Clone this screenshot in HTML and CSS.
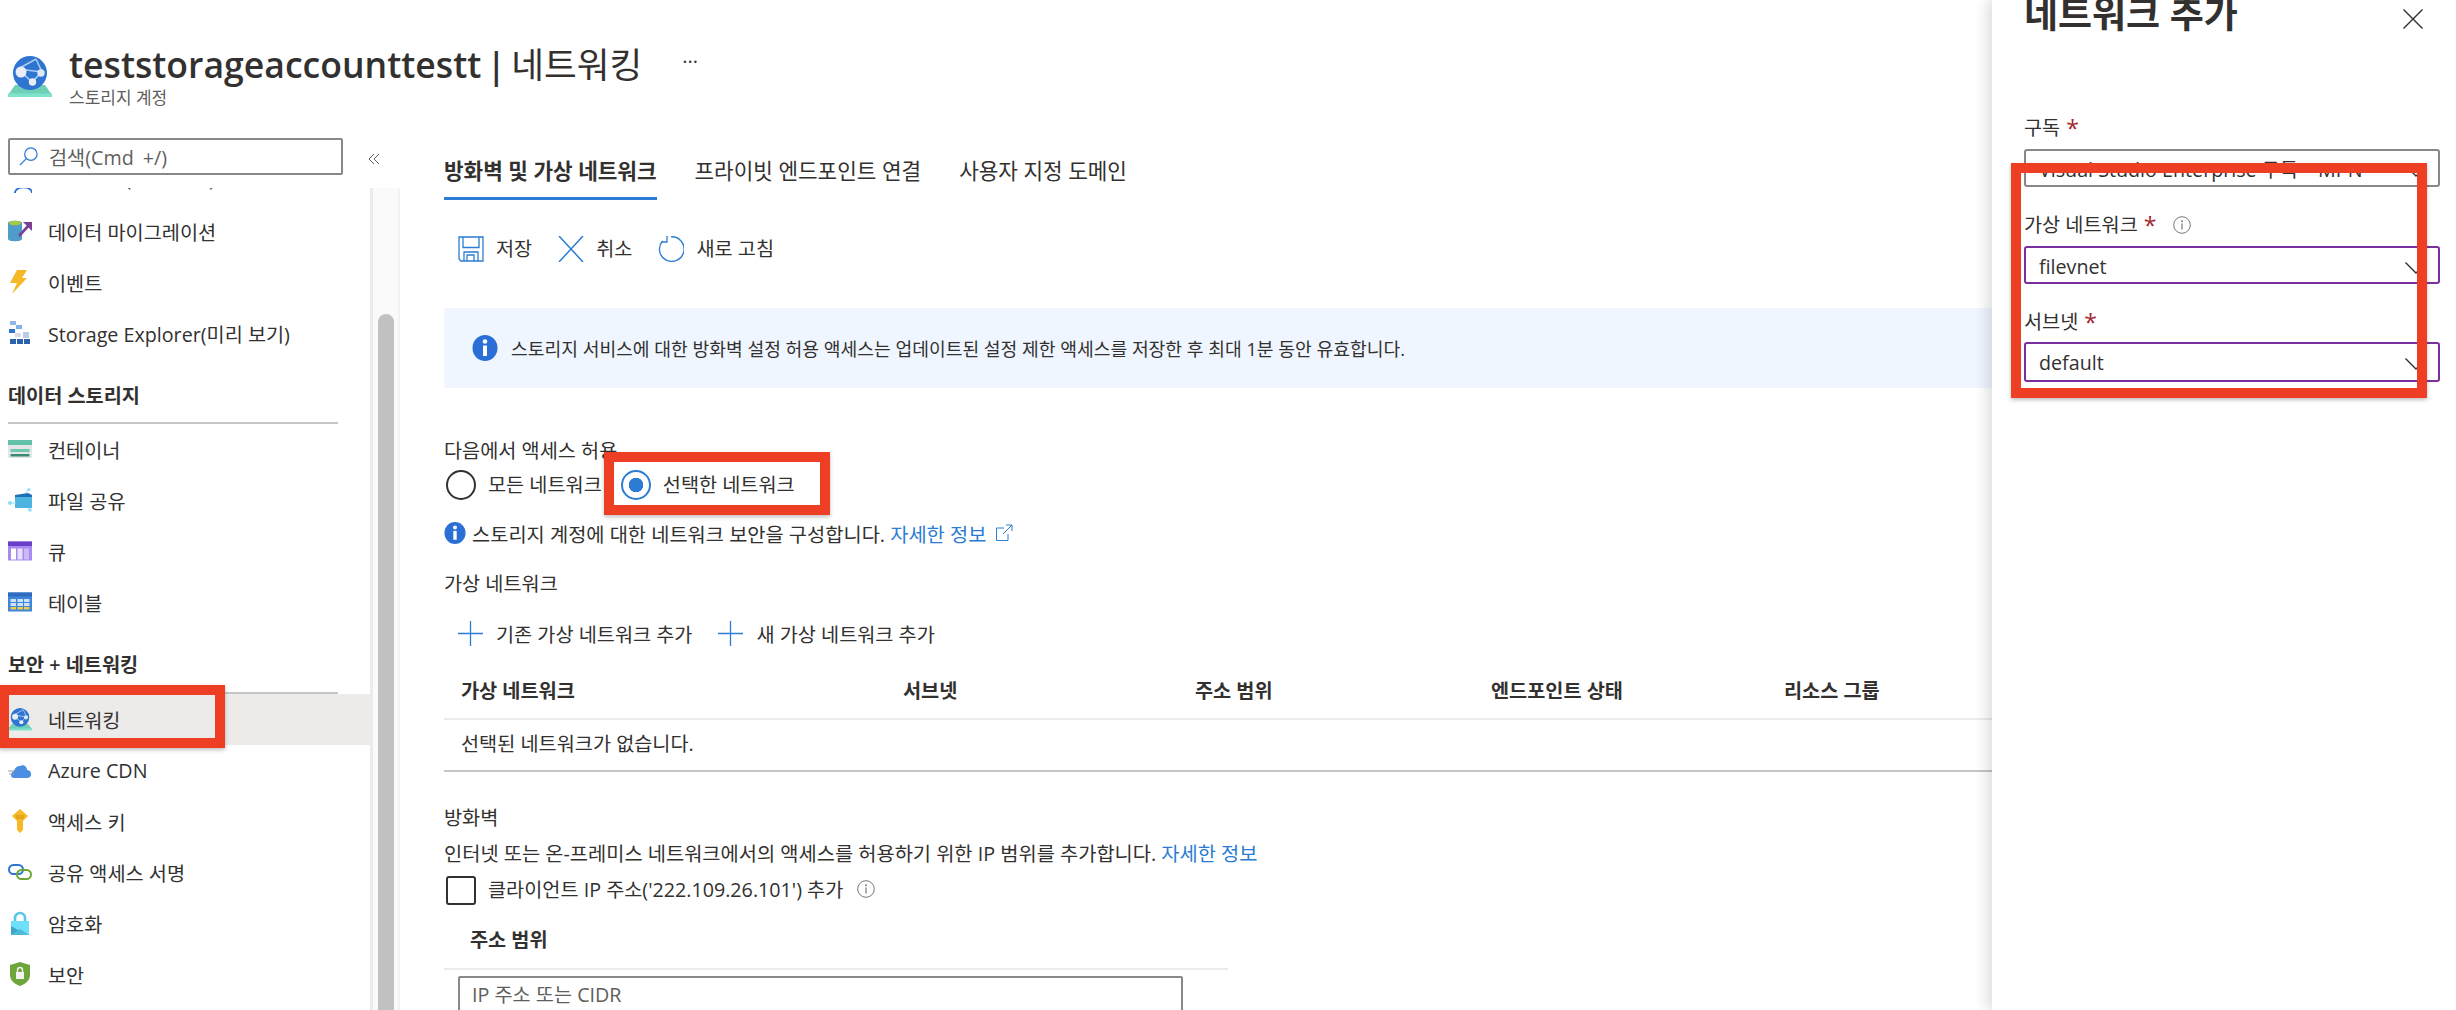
FILE: index.html
```html
<!DOCTYPE html>
<html lang="ko">
<head>
<meta charset="utf-8">
<title>teststorageaccounttestt | 네트워킹</title>
<link rel="stylesheet" href="styles.css">
</head>
<body>
<svg class="defs" width="0" height="0" aria-hidden="true">
  <defs>
    <symbol id="net" viewBox="0 0 44 42">
      <path d="M0 40 L7 30 H37 L44 40 Z" fill="#6fd0b8"/>
      <rect x="0" y="38.500" width="44" height="3.500" fill="#7fe3cb"/>
      <circle cx="22" cy="18" r="17" fill="#2f74d0"/>
      <path d="M10 14 L28 4 M10 14 L24 27 M28 4 L34 17 M24 27 L34 17 M10 14 L34 17" stroke="#a9cdf3" stroke-width="1.600" fill="none"/>
      <circle cx="13" cy="17" r="5.500" fill="#e8eef5"/>
      <circle cx="33" cy="18" r="3.700" fill="#dfe8f2"/>
      <circle cx="24.500" cy="27" r="3.700" fill="#e8eef5"/>
    </symbol>
    <symbol id="ci" viewBox="0 0 26 26">
      <ellipse cx="13" cy="13" rx="12.500" ry="13" fill="#2b6fd6"/>
      <circle cx="13" cy="6.500" r="2.300" fill="#fff"/>
      <rect x="11" y="10.500" width="4" height="10.500" fill="#fff"/>
    </symbol>
    <symbol id="ii" viewBox="0 0 18 18">
      <circle cx="9" cy="9" r="8.300" fill="none" stroke="#7a7875" stroke-width="1"/>
      <circle cx="9" cy="5.300" r="1" fill="#7a7875"/>
      <rect x="8.400" y="7.500" width="1.200" height="6" fill="#7a7875"/>
    </symbol>
    <symbol id="chev" viewBox="0 0 22 12">
      <path d="M0.500 0.500 L11 11 L21.500 0.500" fill="none" stroke="#323130" stroke-width="1.400"/>
    </symbol>
  </defs>
</svg>

<div class="app">
  <header class="blade-head">
    <svg class="head-icon"><use href="#net"/></svg>
    <div class="head-text">
      <h1 class="head-title">teststorageaccounttestt | <span class="head-page">네트워킹</span></h1>
      <div class="head-sub">스토리지 계정</div>
    </div>
    <div class="head-more">···</div>
  </header>

  <div class="workspace">
    <aside class="sidebar">
      <div class="search-row">
        <div class="search">
          <svg class="search-icon" viewBox="0 0 20 20"><circle cx="12.500" cy="7.500" r="6.500" fill="none" stroke="#2b7cd3" stroke-width="1.300"/><path d="M8 12 L1 19" stroke="#2b7cd3" stroke-width="1.300"/></svg>
          <span>검색(Cmd +/)</span>
        </div>
        <svg class="collapse" viewBox="0 0 12 12"><path d="M6 1 L1 6 L6 11 M11 1 L6 6 L11 11" fill="none" stroke="#605e5c" stroke-width="1"/></svg>
      </div>
      <div class="side-body">
        <nav class="nav">
          <div class="nav-item nav-cut">
            <svg class="nav-icon nav-icon-cut" viewBox="0 0 24 24"><path d="M7 8 C7 0.500 24 0.500 24 8" fill="none" stroke="#2b6fd6" stroke-width="1.800"/></svg>
            <span>개체 복제(미리 보기)</span>
          </div>
          <div class="nav-item">
            <svg class="nav-icon" viewBox="0 0 24 24"><path d="M0 4 C0 1 14 1 14 4 V20 C14 23 0 23 0 20 Z" fill="#4f9bc9"/><ellipse cx="7" cy="4" rx="6" ry="2.300" fill="#a5c93f"/><path d="M11 17 L22 5" fill="none" stroke="#7b3f98" stroke-width="2.600"/><path d="M15 3 H24 V12 Z" fill="#7b3f98"/></svg>
            <span>데이터 마이그레이션</span>
          </div>
          <div class="nav-item">
            <svg class="nav-icon" viewBox="0 0 24 24"><path d="M9 0 H19 L14 8 H19 L4 24 L9 13 H2 Z" fill="#f5b826"/></svg>
            <span>이벤트</span>
          </div>
          <div class="nav-item">
            <svg class="nav-icon" viewBox="0 0 24 24"><path d="M2 0 H8 V4 H2 Z" fill="#8fb9ea"/><path d="M8 4 H14 V8 H8 Z" fill="#7fb0ea"/><path d="M1 8 H7 V12 H1 Z" fill="#2f74d0"/><path d="M7 12 H13 V16 H7 Z" fill="#d8dde3"/><path d="M15 11 H21 V17 H15 Z" fill="#b7cdea"/><path d="M2 18 H8 V23 H2 Z M9 18 H15 V23 H9 Z M16 18 H22 V23 H16 Z" fill="#2c62ad"/></svg>
            <span>Storage Explorer(미리 보기)</span>
          </div>

          <div class="nav-group nav-group-first">데이터 스토리지</div>
          <div class="nav-item">
            <svg class="nav-icon" viewBox="0 0 24 18"><rect width="24" height="18" fill="#e3e5e6"/><rect width="24" height="5" fill="#63c0a8"/><rect x="2.500" y="9" width="19" height="3" fill="#6fc7ae"/><rect x="2.500" y="14" width="19" height="2.500" fill="#3e8a78"/></svg>
            <span>컨테이너</span>
          </div>
          <div class="nav-item">
            <svg class="nav-icon" viewBox="0 0 24 24"><path d="M7 7 L20 5 L24 7 V20 H7 Z" fill="#1f6fb4"/><path d="M7 9 H24 V20 H7 Z" fill="#4fb3e0"/><path d="M0 15 H8 M18 5 L20 1 M20 20 L22 23" stroke="#8fe0f8" stroke-width="1"/><circle cx="2" cy="15" r="2" fill="#8fe0f8"/><circle cx="21" cy="1.500" r="1.500" fill="#8fe0f8"/><circle cx="22" cy="22" r="1.800" fill="#8fe0f8"/></svg>
            <span>파일 공유</span>
          </div>
          <div class="nav-item">
            <svg class="nav-icon" viewBox="0 0 24 19"><rect width="24" height="19" fill="#a98bf0"/><rect width="24" height="4.500" fill="#6a3fc9"/><rect x="3" y="7" width="5" height="11" fill="#fff"/><rect x="9.500" y="7" width="5" height="11" fill="#e8e0fb"/><rect x="16" y="7" width="5" height="11" fill="#cbb9f5"/></svg>
            <span>큐</span>
          </div>
          <div class="nav-item">
            <svg class="nav-icon" viewBox="0 0 24 19"><rect width="24" height="19" fill="#3f86d8"/><rect y="0" width="24" height="4" fill="#2f6cc0"/><path d="M2.500 6.500 H8 V9.500 H2.500 Z M9.500 6.500 H15 V9.500 H9.500 Z M16 6.500 H21.500 V9.500 H16 Z M2.500 10.500 H8 V13.500 H2.500 Z M9.500 10.500 H15 V13.500 H9.500 Z M16 10.500 H21.500 V13.500 H16 Z" fill="#cfe3f8"/><path d="M2.500 14.500 H8 V17 H2.500 Z M9.500 14.500 H15 V17 H9.500 Z M16 14.500 H21.500 V17 H16 Z" fill="#f2cb4a"/></svg>
            <span>테이블</span>
          </div>

          <div class="nav-group">보안 + 네트워킹</div>
          <div class="nav-item nav-active">
            <svg class="nav-icon"><use href="#net"/></svg>
            <span>네트워킹</span>
          </div>
          <div class="nav-item">
            <svg class="nav-icon" viewBox="0 0 24 16"><path d="M6 16 C2 16 2 10 6 9 C7 5 10 4 12 4 C15 2 19 4 19 8 C24 8 25 16 19 16 Z" fill="#4a8fe4"/><path d="M0 9 H6 M1 12 H6" stroke="#a19f9d" stroke-width="1.200"/></svg>
            <span>Azure CDN</span>
          </div>
          <div class="nav-item">
            <svg class="nav-icon" viewBox="0 0 24 24"><path d="M12 0 L20 7 L15 12 V21 L12 24 L9 21 V12 L4 7 Z" fill="#f6b928"/><path d="M8 7 H16 M8 9 H16" stroke="#d39410" stroke-width="1"/></svg>
            <span>액세스 키</span>
          </div>
          <div class="nav-item">
            <svg class="nav-icon" viewBox="0 0 24 16"><rect x="1" y="1" width="14" height="9" rx="4.500" fill="none" stroke="#2f74d0" stroke-width="2"/><rect x="9" y="6" width="14" height="9" rx="4.500" fill="none" stroke="#6da53a" stroke-width="2"/></svg>
            <span>공유 액세스 서명</span>
          </div>
          <div class="nav-item">
            <svg class="nav-icon" viewBox="0 0 24 24"><path d="M7 11 V7 A5 5 0 0 1 17 7 V11" fill="none" stroke="#59c7ea" stroke-width="2.600"/><rect x="3" y="10" width="18" height="14" fill="#6fe0fa"/><path d="M3 24 L3 15 L12 20 Z" fill="#3fa6c8"/><path d="M3 24 H21 L12 18 Z" fill="#4cbadb"/></svg>
            <span>암호화</span>
          </div>
          <div class="nav-item">
            <svg class="nav-icon" viewBox="0 0 24 24"><path d="M12 0 L22 3 V13 C22 19 17 22 12 24 C7 22 2 19 2 13 V3 Z" fill="#6fa63c"/><rect x="8" y="10" width="8" height="7" fill="#f3f3f3"/><path d="M9.500 10 V8 A2.500 2.500 0 0 1 14.500 8 V10" fill="none" stroke="#f3f3f3" stroke-width="1.400"/></svg>
            <span>보안</span>
          </div>
        </nav>
        <div class="side-scroll"><div class="side-thumb"></div></div>
      </div>
    </aside>

    <main class="main">
      <div class="tabs">
        <div class="tab tab-on">방화벽 및 가상 네트워크</div>
        <div class="tab">프라이빗 엔드포인트 연결</div>
        <div class="tab">사용자 지정 도메인</div>
      </div>

      <div class="toolbar">
        <div class="tool">
          <svg class="tool-icon" viewBox="0 0 26 26"><path d="M1 1 H25 V25 H3 L1 23 Z M5 1 V11.500 H21 V1 M6 25 V16 H20 V25 M9 25 V19 H16 V25" fill="none" stroke="#2b7cd3" stroke-width="1.300"/></svg>
          <span>저장</span>
        </div>
        <div class="tool">
          <svg class="tool-icon" viewBox="0 0 26 26"><path d="M1 0 L25 26 M25 0 L1 26" stroke="#2b7cd3" stroke-width="1.500"/></svg>
          <span>취소</span>
        </div>
        <div class="tool">
          <svg class="tool-icon" viewBox="0 0 26 26"><path d="M4.500 5 A12.300 12.300 0 1 0 13 0.800" fill="none" stroke="#2b7cd3" stroke-width="1.300"/><path d="M9 0 V6 H3.500" fill="none" stroke="#2b7cd3" stroke-width="1.300"/></svg>
          <span>새로 고침</span>
        </div>
      </div>

      <div class="notice">
        <svg class="notice-icon"><use href="#ci"/></svg>
        <span>스토리지 서비스에 대한 방화벽 설정 허용 액세스는 업데이트된 설정 제한 액세스를 저장한 후 최대 1분 동안 유효합니다.</span>
      </div>

      <div class="allow-label">다음에서 액세스 허용</div>
      <div class="radios">
        <label class="radio"><span class="radio-dot"></span><span class="radio-text">모든 네트워크</span></label>
        <label class="radio"><span class="radio-dot radio-on"></span><span class="radio-text">선택한 네트워크</span></label>
      </div>
      <div class="hint">
        <svg class="hint-icon"><use href="#ci"/></svg>
        <span>스토리지 계정에 대한 네트워크 보안을 구성합니다. <a class="link">자세한 정보</a></span>
        <svg class="ext" viewBox="0 0 18 18"><path d="M9 4 H1.500 V16.500 H13 V10 M8 10 L17 1 M11 1 H17 V7" fill="none" stroke="#2b7cd3" stroke-width="1"/></svg>
      </div>

      <div class="section-title">가상 네트워크</div>
      <div class="add-row">
        <div class="add">
          <svg class="plus" viewBox="0 0 25 25"><path d="M12.500 0 V25 M0 12.500 H25" stroke="#2b7cd3" stroke-width="1.300"/></svg>
          <span>기존 가상 네트워크 추가</span>
        </div>
        <div class="add">
          <svg class="plus" viewBox="0 0 25 25"><path d="M12.500 0 V25 M0 12.500 H25" stroke="#2b7cd3" stroke-width="1.300"/></svg>
          <span>새 가상 네트워크 추가</span>
        </div>
      </div>

      <div class="grid-head">
        <div>가상 네트워크</div>
        <div>서브넷</div>
        <div>주소 범위</div>
        <div>엔드포인트 상태</div>
        <div>리소스 그룹</div>
      </div>
      <div class="grid-row">선택된 네트워크가 없습니다.</div>

      <div class="fw-title">방화벽</div>
      <div class="fw-desc">인터넷 또는 온-프레미스 네트워크에서의 액세스를 허용하기 위한 IP 범위를 추가합니다. <a class="link">자세한 정보</a></div>
      <label class="check">
        <span class="check-box"></span>
        <span>클라이언트 IP 주소('222.109.26.101') 추가</span>
        <svg class="check-info"><use href="#ii"/></svg>
      </label>
      <div class="range-head">주소 범위</div>
      <div class="range-input">IP 주소 또는 CIDR</div>
    </main>
  </div>

  <section class="panel">
    <div class="panel-head">
      <h2 class="panel-title">네트워크 추가</h2>
      <svg class="panel-close" viewBox="0 0 20 20"><path d="M0.500 0.500 L19.500 19.500 M19.500 0.500 L0.500 19.500" stroke="#323130" stroke-width="1.400"/></svg>
    </div>
    <div class="field">
      <div class="field-label">구독 <span class="req">*</span></div>
      <div class="select">Visual Studio Enterprise 구독 – MPN<svg class="chev"><use href="#chev"/></svg></div>
    </div>
    <div class="field">
      <div class="field-label">가상 네트워크 <span class="req">*</span><svg class="field-info"><use href="#ii"/></svg></div>
      <div class="select select-focus">filevnet<svg class="chev"><use href="#chev"/></svg></div>
    </div>
    <div class="field">
      <div class="field-label">서브넷 <span class="req">*</span></div>
      <div class="select select-focus select-tall">default<svg class="chev"><use href="#chev"/></svg></div>
    </div>
  </section>

  <div class="mark mark-nav"></div>
  <div class="mark mark-radio"></div>
  <div class="mark mark-panel"></div>
</div>
</body>
</html>
```

FILE: styles.css
```css
* { box-sizing: border-box; }
html, body { margin: 0; padding: 0; height: 100%; background: #fff; overflow: hidden; }
body {
  font-family: "Open Sans", "Noto Sans CJK KR", sans-serif;
  font-size: 19.7px;
  color: #323130;
}
.defs { position: absolute; }
.app { position: relative; width: 2456px; height: 1010px; overflow: hidden; }

.blade-head { height: 130px; display: flex; align-items: flex-start; padding: 42px 0 0 8px; }
.head-icon { width: 44px; height: 42px; margin-top: 13px; flex: none; }
.head-text { margin-left: 17px; }
.head-title { margin: 0; font-size: 35.600px; line-height: 44px; font-weight: 600; word-spacing: -4px; color: #323130; }
.head-page { font-weight: 400; }
.head-sub { font-size: 17px; line-height: 24px; color: #605e5c; margin-top: 0; }
.head-more { margin: 1px 0 0 40px; font-size: 20px; line-height: 38px; color: #323130; }

.workspace { display: flex; height: 880px; }

.sidebar { width: 400px; flex: none; display: flex; flex-direction: column; }
.search-row { height: 58px; display: flex; align-items: flex-start; padding: 8px 0 0 8px; flex: none; }
.search { width: 335px; height: 37px; border: 2px solid #8a8886; border-radius: 2px; display: flex; align-items: center; padding-left: 9px; color: #605e5c; }
.search span { margin-left: 11px; word-spacing: 4px; }
.search-icon { width: 19px; height: 19px; }
.collapse { width: 12px; height: 12px; margin: 15px 0 0 25px; }
.side-body { flex: 1; display: flex; min-height: 0; overflow: hidden; }
.nav { width: 370px; flex: none; overflow: hidden; }
.nav-item { height: 51px; display: flex; align-items: center; padding: 0 0 1px 8px; white-space: nowrap; }
.nav-cut { margin-top: -36px; height: 54px; padding-bottom: 4px; }
.nav-icon { width: 24px; height: 24px; flex: none; margin-right: 16px; }
.nav-icon-cut { margin-top: 40px; }
.nav-active { background: #edebe9; }
.nav-group { height: 66px; margin-right: 32px; margin-left: 8px; padding-top: 25px; line-height: 24px; font-weight: 600; border-bottom: 2px solid #c8c6c4; }
.nav-group-first { height: 65px; }
.side-scroll { width: 30px; flex: none; background: #fafafa; border-left: 3px solid #edebe9; border-right: 2px solid #f3f2f1; padding: 126px 4px 0 5px; }
.side-thumb { height: 800px; background: #c1c1c1; border-radius: 8px 8px 0 0; }

.main { flex: 1; min-width: 0; padding: 0 0 0 44px; }
.tabs { display: flex; gap: 38px; height: 72px; margin-top: -2px; padding-top: 26px; }
.tab { height: 46px; padding-top: 3px; font-size: 21.300px; line-height: 28px; white-space: nowrap; }
.tab-on { font-weight: 600; border-bottom: 3px solid #2b7cd3; }
.toolbar { display: flex; gap: 26px; padding: 35px 0 0 14px; height: 80px; }
.tool { display: flex; align-items: center; height: 28px; gap: 12px; }
.tool span { padding-bottom: 4px; }
.tool-icon { width: 26px; height: 26px; }
.notice { width: 1548px; height: 80px; margin-top: 28px; background: #f0f6ff; border-radius: 2px; display: flex; align-items: center; padding-left: 28px; font-size: 18.200px; white-space: nowrap; }
.notice-icon { width: 26px; height: 26px; margin-right: 13px; flex: none; }
.allow-label { margin-top: 50px; line-height: 26px; }
.radios { display: flex; gap: 17px; margin-top: 4px; height: 34px; }
.radio { display: flex; align-items: center; padding-left: 2px; gap: 12px; }
.radio-text { padding-bottom: 3px; }
.radio-dot { width: 30px; height: 30px; border-radius: 50%; border: 2px solid #323130; display: block; flex: none; }
.radio-on { border-color: #2b7cd3; background: radial-gradient(circle, #2b7cd3 0 7px, #fff 7.500px); }
.hint { display: flex; align-items: center; height: 28px; margin-top: 17px; font-size: 19.800px; white-space: nowrap; }
.hint-icon { width: 22px; height: 22px; margin-right: 6px; flex: none; }
.ext { width: 18px; height: 18px; margin-left: 9px; }
.link { color: #2b7cd3; }
.section-title { margin-top: 23px; line-height: 28px; }
.add-row { display: flex; gap: 26px; padding-left: 14px; margin-top: 21px; height: 28px; }
.add { display: flex; align-items: center; gap: 13px; white-space: nowrap; }
.plus { width: 25px; height: 25px; }
.grid-head { display: grid; grid-template-columns: 442px 292px 296px 293px 1fr; height: 55px; margin-top: 18px; width: 1548px; padding: 12px 0 0 17px; border-bottom: 2px solid #edebe9; font-weight: 600; line-height: 28px; }
.grid-row { width: 1548px; height: 52px; border-bottom: 2px solid #c8c6c4; padding: 10px 0 0 17px; line-height: 28px; }
.fw-title { margin-top: 32px; line-height: 28px; }
.fw-desc { margin-top: 8px; font-size: 19.800px; line-height: 28px; white-space: nowrap; }
.check { display: flex; align-items: center; height: 30px; margin-top: 5px; padding-left: 2px; white-space: nowrap; }
.check-box { width: 30px; height: 29px; border: 2px solid #323130; border-radius: 3px; margin: 4px 12px 0 0; flex: none; }
.check-info { width: 18px; height: 18px; margin: 2px 0 0 14px; }
.range-head { width: 784px; height: 62px; border-bottom: 2px solid #edebe9; margin-top: 5px; padding: 19px 0 0 26px; line-height: 26px; font-weight: 600; }
.range-input { width: 725px; height: 60px; margin: 6px 0 0 14px; border: 2px solid #8a8886; border-radius: 2px; padding: 4px 0 0 12px; line-height: 26px; color: #605e5c; }

.panel { position: absolute; top: 0; right: 0; bottom: 0; width: 464px; background: #fff; box-shadow: -6px 0 12px rgba(0,0,0,.12); padding: 0 16px 0 32px; }
.panel-head { height: 111px; position: relative; display: flow-root; }
.panel-title { margin: -11px 0 0; font-size: 37px; line-height: 50px; font-weight: 600; }
.panel-close { position: absolute; top: 9px; right: 17px; width: 20px; height: 20px; }
.field { margin-bottom: 21px; }
.field-label { height: 38px; padding-top: 5px; line-height: 24px; display: flex; align-items: flex-start; gap: 6px; }
.req { color: #a4262c; font-size: 23px; }
.field-info { width: 18px; height: 18px; margin: 3px 0 0 11px; }
.select { position: relative; height: 38px; border: 2px solid #8a8886; border-radius: 3px; padding-left: 13px; line-height: 38px; white-space: nowrap; }
.select-focus { border-color: #7b2f9e; }
.select-tall { height: 40px; margin-top: -1px; }
.chev { position: absolute; right: 11px; top: 14px; width: 22px; height: 12px; }

.mark { position: absolute; border: 10px solid #ee3e23; box-shadow: 0 2px 4px rgba(0,0,0,.25); }
.mark-nav { left: -1px; top: 685px; width: 226px; height: 63px; }
.mark-radio { left: 604px; top: 452px; width: 226px; height: 63px; }
.mark-panel { left: 2011px; top: 163px; width: 416px; height: 235px; }
```
